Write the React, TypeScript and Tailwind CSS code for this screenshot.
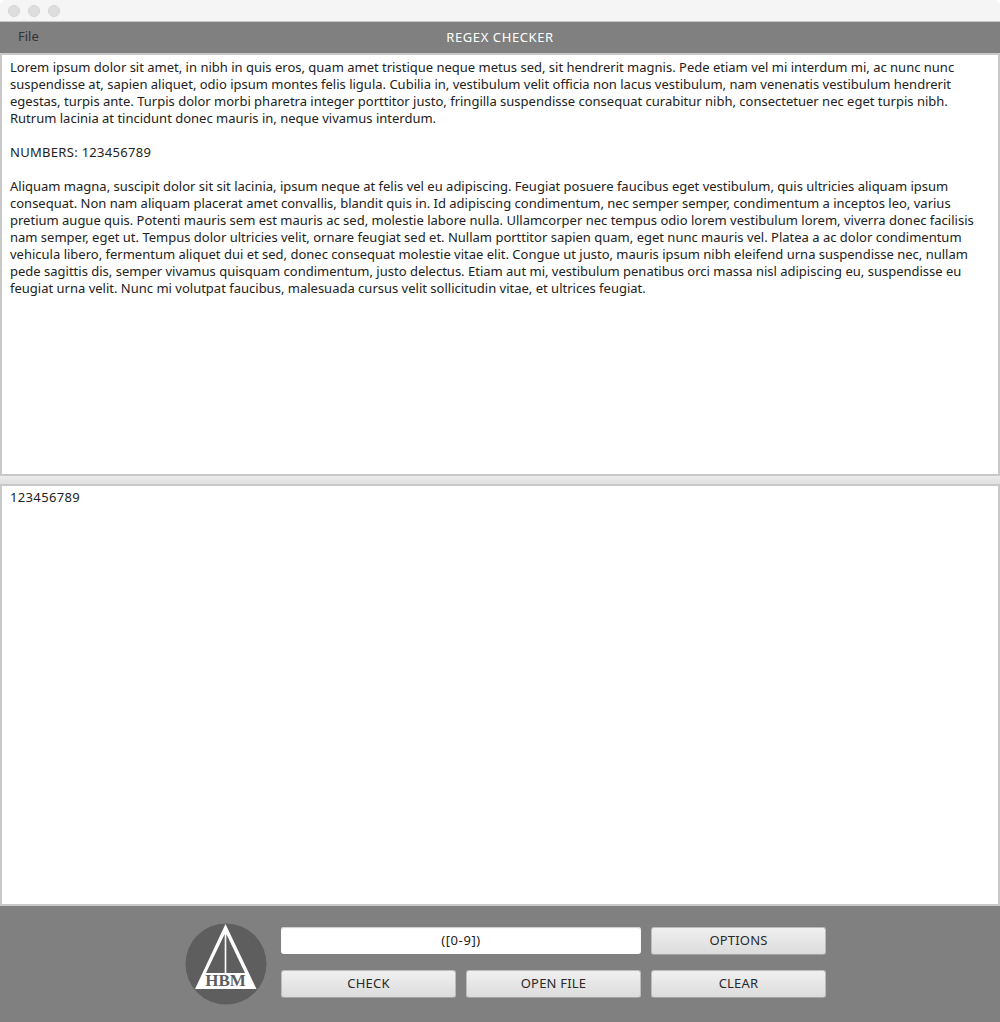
const topLines = [
  'Lorem ipsum dolor sit amet, in nibh in quis eros, quam amet tristique neque metus sed, sit hendrerit magnis. Pede etiam vel mi interdum mi, ac nunc nunc',
  'suspendisse at, sapien aliquet, odio ipsum montes felis ligula. Cubilia in, vestibulum velit officia non lacus vestibulum, nam venenatis vestibulum hendrerit',
  'egestas, turpis ante. Turpis dolor morbi pharetra integer porttitor justo, fringilla suspendisse consequat curabitur nibh, consectetuer nec eget turpis nibh.',
  'Rutrum lacinia at tincidunt donec mauris in, neque vivamus interdum.',
  '',
  'NUMBERS: 123456789',
  '',
  'Aliquam magna, suscipit dolor sit sit lacinia, ipsum neque at felis vel eu adipiscing. Feugiat posuere faucibus eget vestibulum, quis ultricies aliquam ipsum',
  'consequat. Non nam aliquam placerat amet convallis, blandit quis in. Id adipiscing condimentum, nec semper semper, condimentum a inceptos leo, varius',
  'pretium augue quis. Potenti mauris sem est mauris ac sed, molestie labore nulla. Ullamcorper nec tempus odio lorem vestibulum lorem, viverra donec facilisis',
  'nam semper, eget ut. Tempus dolor ultricies velit, ornare feugiat sed et. Nullam porttitor sapien quam, eget nunc mauris vel. Platea a ac dolor condimentum',
  'vehicula libero, fermentum aliquet dui et sed, donec consequat molestie vitae elit. Congue ut justo, mauris ipsum nibh eleifend urna suspendisse nec, nullam',
  'pede sagittis dis, semper vivamus quisquam condimentum, justo delectus. Etiam aut mi, vestibulum penatibus orci massa nisl adipiscing eu, suspendisse eu',
  'feugiat urna velit. Nunc mi volutpat faucibus, malesuada cursus velit sollicitudin vitae, et ultrices feugiat.',
]

function Btn({ label }: { label: string }) {
  return (
    <button className="h-[28px] w-[175px] rounded-[3px] border border-[#bcbcbc] border-b-[#a4a4a4] bg-gradient-to-b from-[#f0f0f0] to-[#dcdcdc] text-[13px] tracking-[0.2px] text-[#2a2a2a]">
      {label}
    </button>
  )
}

function Logo() {
  return (
    <svg width="82" height="82" viewBox="0 0 82 82" className="shrink-0">
      <circle cx="41" cy="41" r="40.5" fill="#5e5e5e" />
      <path d="M40.5 1 L71.5 66 L10 66 Z" fill="#ffffff" />
      <path d="M39.7 11 L39.7 50 L21 50 Z" fill="#5e5e5e" />
      <path d="M41.3 11 L41.3 50 L60 50 Z" fill="#5e5e5e" />
      <text x="40.5" y="63" textAnchor="middle" fontFamily="'Liberation Serif', serif" fontWeight="700" fontSize="17" fill="#5e5e5e">HBM</text>
    </svg>
  )
}

export default function App() {
  return (
    <div className="flex h-[1022px] w-[1000px] flex-col overflow-hidden bg-white font-['Noto_Sans',sans-serif] text-[13px] text-[#222]">
      <div className="flex h-[22px] items-center gap-2 rounded-t-[5px] border-b border-[#c8c8c8] bg-[#f5f5f5] pl-2">
        <span className="h-3 w-3 rounded-full border border-[#d4d4d4] bg-[#dedede]" />
        <span className="h-3 w-3 rounded-full border border-[#d4d4d4] bg-[#dedede]" />
        <span className="h-3 w-3 rounded-full border border-[#d4d4d4] bg-[#dedede]" />
      </div>

      <div className="relative flex h-[31px] items-center bg-[#808080] pb-[2px] pl-[18px]">
        <span className="text-[#333]">File</span>
        <span className="absolute inset-x-0 top-[6px] text-center text-[13px] tracking-[0.6px] text-white">REGEX CHECKER</span>
      </div>

      <div className="h-[423px] border-2 border-[#c8c8c8] bg-white px-2 pt-[4px] leading-[17px] whitespace-nowrap">
        {topLines.map((line, i) => (
          <div key={i} className={line.startsWith('NUMBERS') ? 'h-[17px] tracking-[0.3px]' : 'h-[17px]'}>{line}</div>
        ))}
      </div>

      <div className="h-[8px] bg-gradient-to-b from-[#ececec] to-[#dedede]" />

      <div className="h-[422px] border-2 border-[#c8c8c8] bg-white px-2 pt-[3px] leading-[17px] tracking-[0.35px]">123456789</div>

      <div className="flex flex-1 justify-center bg-[#808080] pl-[11px] pt-[17px]">
        <div className="flex items-start gap-[14px]">
          <Logo />
          <div className="flex flex-col gap-[15px] pt-[4px]">
            <div className="flex gap-[10px]">
              <div className="flex h-[27px] w-[360px] items-center justify-center rounded-[3px] bg-white text-[13px] tracking-[0.6px] shadow-[inset_0_1px_1px_#ccc]">([0-9])</div>
              <Btn label="OPTIONS" />
            </div>
            <div className="flex gap-[10px]">
              <Btn label="CHECK" />
              <Btn label="OPEN FILE" />
              <Btn label="CLEAR" />
            </div>
          </div>
        </div>
      </div>
    </div>
  )
}
